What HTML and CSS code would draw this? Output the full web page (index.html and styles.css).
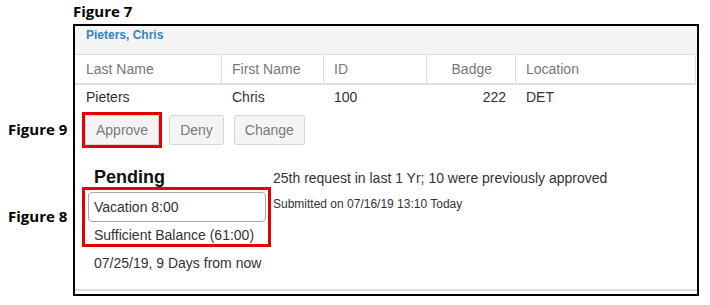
FILE: index.html
```html
<!DOCTYPE html>
<html lang="en">
<head>
  <meta charset="UTF-8">
  <title>Pending Request</title>
  <link rel="stylesheet" href="styles.css">
</head>
<body>

  <div class="fig-title">Figure 7</div>

  <div class="panel">
    <div class="panel-head">Pieters, Chris</div>

    <table class="emp">
      <thead>
        <tr>
          <th class="c-last">Last Name</th>
          <th class="c-first">First Name</th>
          <th class="c-id">ID</th>
          <th class="c-badge num">Badge</th>
          <th class="c-loc">Location</th>
        </tr>
      </thead>
      <tbody>
        <tr>
          <td>Pieters</td>
          <td>Chris</td>
          <td>100</td>
          <td class="num">222</td>
          <td>DET</td>
        </tr>
      </tbody>
    </table>

    <div class="panel-body">
      <div class="actions">
        <span class="fig-label">Figure 9</span>
        <button class="btn marked">Approve</button>
        <button class="btn">Deny</button>
        <button class="btn">Change</button>
      </div>

      <div class="request">
        <div class="req-left">
          <h2 class="req-status">Pending</h2>
          <div class="req-box">
            <span class="fig-label">Figure 8</span>
            <div class="req-type">Vacation 8:00</div>
            <div class="req-balance">Sufficient Balance (61:00)</div>
          </div>
          <div class="req-date">07/25/19, 9 Days from now</div>
        </div>
        <div class="req-right">
          <div class="req-history">25th request in last 1 Yr; 10 were previously approved</div>
          <div class="req-submitted">Submitted on 07/16/19 13:10 Today</div>
        </div>
      </div>
    </div>
  </div>

</body>
</html>
```

FILE: styles.css
```css
* {
  box-sizing: border-box;
}
body {
  margin: 0;
  padding-top: 1px;
  background: #fff;
  font-family: 'Liberation Sans', Arial, sans-serif;
  color: #333;
}
/* Etiquetas de figura */
.fig-title,
.fig-label {
  font-family: 'Open Sans', sans-serif;
  font-weight: 700;
  font-size: 15px;
  line-height: 20px;
  color: #000;
}
.fig-title {
  margin: 0 0 3px 73px;
}
.fig-label {
  position: absolute;
  white-space: nowrap;
}
.panel {
  margin-left: 73px;
  width: 626px;
  border: 2px solid #000;
  padding-bottom: 3px;
}
.panel-head {
  background: #f5f5f5;
  border-bottom: 1px solid #ddd;
  padding: 1px 11px 11px;
  font-size: 12px;
  line-height: 16px;
  font-weight: 700;
  color: #3482c2;
}
/* Tabla de empleado */
.emp {
  border-collapse: separate;
  border-spacing: 0;
  table-layout: fixed;
  width: 621px;
}
.emp th,
.emp td {
  font-size: 14px;
  line-height: 16px;
  text-align: left;
  padding-left: 10px;
  padding-right: 10px;
}
.emp th {
  font-weight: 400;
  color: #777;
  padding-top: 6px;
  padding-bottom: 6px;
  border-right: 1px solid #ddd;
  border-bottom: 2px solid #ddd;
}
.emp td {
  padding-top: 4px;
  padding-bottom: 7px;
}
.emp th:first-child,
.emp td:first-child {
  padding-left: 11px;
}
.emp .num {
  text-align: right;
}
.emp th.num {
  padding-right: 23px;
}
.c-last { width: 147px; }
.c-first { width: 102px; }
.c-id { width: 103px; }
.c-badge { width: 89px; }
.c-loc { width: 180px; }

.panel-body {
  padding: 0 0 18px 7px;
  border-bottom: 2px solid #ddd;
}
.actions {
  position: relative;
  display: flex;
  gap: 10px;
  margin: 3px 0 0 3px;
}
.actions .fig-label {
  left: -77px;
  top: 4px;
}
.btn {
  height: 30px;
  padding: 0 10px;
  background: #f4f4f4;
  border: 1px solid #d6d6d6;
  border-radius: 3px;
  font-family: inherit;
  font-size: 14px;
  color: #7a7a7a;
}
.btn.marked {
  border-radius: 0;
  outline: 3px solid #e50000;
  outline-offset: 0;
}
/* Solicitud pendiente */
.request {
  display: grid;
  grid-template-columns: 189px 1fr;
  column-gap: 2px;
  margin-top: 22px;
}
.req-status {
  margin: 0;
  padding-left: 12px;
  font-size: 18px;
  line-height: 20px;
  font-weight: 700;
  color: #111;
}
.req-box {
  position: relative;
  border: 3px solid #e50000;
  padding: 2px 2px 1px 3px;
}
.req-box .fig-label {
  left: -77px;
  top: 16px;
}
.req-type {
  height: 30px;
  border: 1px solid #aaa;
  border-radius: 4px;
  padding: 6px 5px 0;
  font-size: 14px;
  line-height: 16px;
}
.req-balance {
  margin-top: 5px;
  padding-left: 6px;
  font-size: 14px;
  line-height: 16px;
}
.req-date {
  margin-top: 8px;
  padding-left: 12px;
  font-size: 14px;
  line-height: 16px;
}
.req-history {
  padding-top: 1px;
  font-size: 14px;
  line-height: 20px;
}
.req-submitted {
  margin-top: 9px;
  font-size: 12px;
  line-height: 14px;
}
```
